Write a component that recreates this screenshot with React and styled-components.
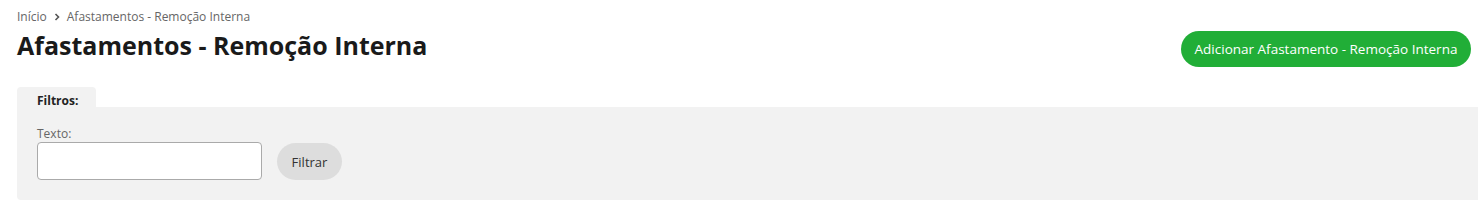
import styled, { createGlobalStyle } from "styled-components";

const GlobalStyle = createGlobalStyle`
  body {
    margin: 0;
    font-family: "Open Sans", "Noto Sans", sans-serif;
    background: #fff;
    color: #222;
  }
`;

const Page = styled.div`
  padding: 9px 0 0 17px;
`;

const Breadcrumb = styled.nav`
  display: flex;
  align-items: center;
  gap: 7px;
  font-size: 12px;
  color: #666;
  line-height: 16px;
`;

const Crumb = styled.span`
  color: #666;
`;

const Header = styled.div`
  display: flex;
  align-items: center;
  justify-content: space-between;
  padding-right: 7px;
  margin-top: 6px;
`;

const Title = styled.h1`
  margin: -8px 0 0;
  font-size: 25px;
  font-weight: 700;
  line-height: 32px;
  color: #1a1a1a;
`;

const PrimaryButton = styled.button`
  font-family: inherit;
  font-size: 13.5px;
  color: #fff;
  background: #21ae37;
  border: none;
  border-radius: 18px;
  height: 36px;
  width: 290px;
  padding: 0;
  cursor: pointer;
`;

const Filters = styled.section`
  margin-top: 20px;
`;

const Tab = styled.div`
  background: #f2f2f2;
  border-radius: 4px 4px 0 0;
  padding: 0 20px;
  width: 79px;
  box-sizing: border-box;
  height: 20px;
  font-size: 12px;
  font-weight: 700;
  line-height: 28px;
  color: #222;
`;

const Panel = styled.div`
  background: #f2f2f2;
  border-radius: 0 0 0 4px;
  padding: 18px 20px 20px;
  display: flex;
  align-items: flex-end;
  gap: 15px;
`;

const Field = styled.label`
  display: flex;
  flex-direction: column;
`;

const FieldLabel = styled.span`
  font-size: 12px;
  color: #666;
  line-height: 17px;
`;

const TextInput = styled.input`
  width: 225px;
  height: 38px;
  box-sizing: border-box;
  border: 1px solid #aaa;
  border-radius: 4px;
  background: #fff;
  font-family: inherit;
  font-size: 13px;
  padding: 0 8px;
`;

const SecondaryButton = styled.button`
  font-family: inherit;
  font-size: 13px;
  color: #333;
  background: #ddd;
  border: none;
  border-radius: 19px;
  height: 37px;
  width: 65px;
  cursor: pointer;
`;

const Chevron = () => (
  <svg width="6" height="8" viewBox="0 0 6 8" aria-hidden="true">
    <path d="M1.5 1 L4.5 4 L1.5 7" fill="none" stroke="#555" strokeWidth="1.6" />
  </svg>
);

export default function App() {
  return (
    <>
      <GlobalStyle />
      <Page>
        <Breadcrumb>
          <Crumb>Início</Crumb>
          <Chevron />
          <Crumb>Afastamentos - Remoção Interna</Crumb>
        </Breadcrumb>
        <Header>
          <Title>Afastamentos - Remoção Interna</Title>
          <PrimaryButton>Adicionar Afastamento - Remoção Interna</PrimaryButton>
        </Header>
        <Filters>
          <Tab>Filtros:</Tab>
          <Panel>
            <Field>
              <FieldLabel>Texto:</FieldLabel>
              <TextInput type="text" />
            </Field>
            <SecondaryButton>Filtrar</SecondaryButton>
          </Panel>
        </Filters>
      </Page>
    </>
  );
}
